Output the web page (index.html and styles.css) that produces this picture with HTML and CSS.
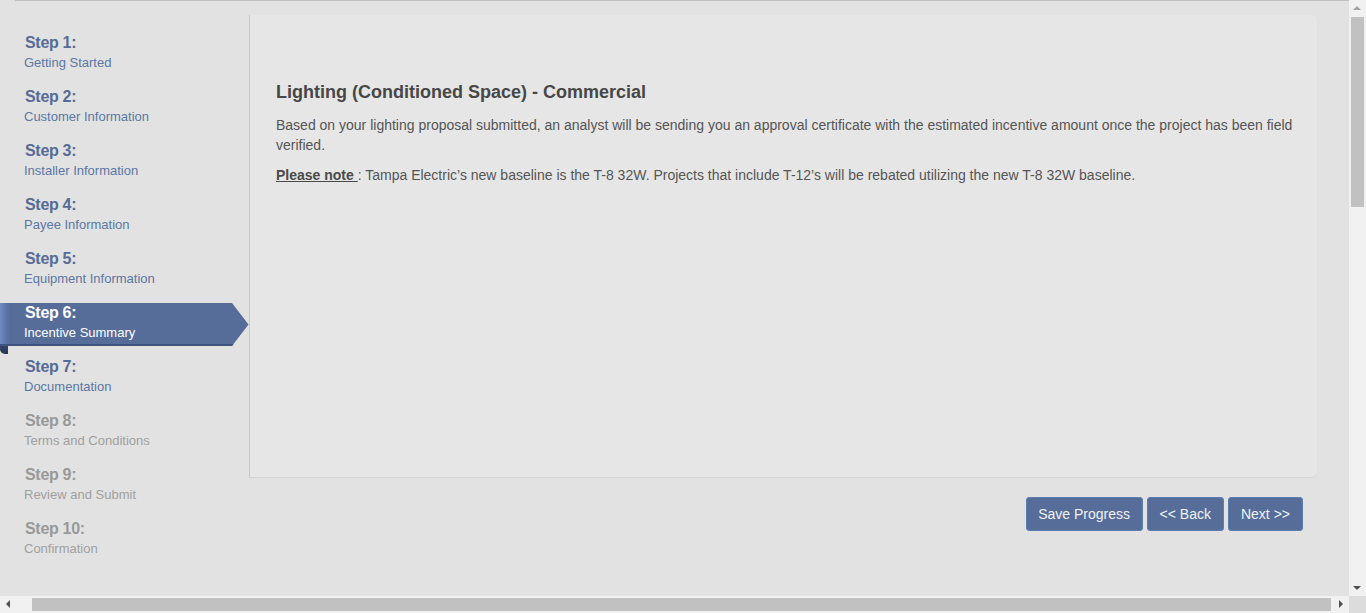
FILE: index.html
```html
<!DOCTYPE html>
<html lang="en">
<head>
<meta charset="utf-8">
<title>Incentive Summary</title>
<link rel="stylesheet" href="styles.css">
</head>
<body>
<div class="topline"></div>
<div class="layout">
  <nav class="steps">
    <div class="step"><div class="step-label">Step 1:</div><div class="step-name">Getting Started</div></div>
    <div class="step"><div class="step-label">Step 2:</div><div class="step-name">Customer Information</div></div>
    <div class="step"><div class="step-label">Step 3:</div><div class="step-name">Installer Information</div></div>
    <div class="step"><div class="step-label">Step 4:</div><div class="step-name">Payee Information</div></div>
    <div class="step"><div class="step-label">Step 5:</div><div class="step-name">Equipment Information</div></div>
    <div class="step step-active"><div class="step-label">Step 6:</div><div class="step-name">Incentive Summary</div></div>
    <div class="step"><div class="step-label">Step 7:</div><div class="step-name">Documentation</div></div>
    <div class="step step-disabled"><div class="step-label">Step 8:</div><div class="step-name">Terms and Conditions</div></div>
    <div class="step step-disabled"><div class="step-label">Step 9:</div><div class="step-name">Review and Submit</div></div>
    <div class="step step-disabled"><div class="step-label">Step 10:</div><div class="step-name">Confirmation</div></div>
  </nav>
  <main class="main">
    <section class="panel">
      <h3 class="panel-title">Lighting (Conditioned Space) - Commercial</h3>
      <p class="panel-text">Based on your lighting proposal submitted, an analyst will be sending you an approval certificate with the estimated incentive amount once the project has been field verified.</p>
      <p class="panel-text"><span class="note">Please note </span>: Tampa Electric’s new baseline is the T-8 32W. Projects that include T-12’s will be rebated utilizing the new T-8 32W baseline.</p>
    </section>
    <div class="actions">
      <button class="btn btn-wide" type="button">Save Progress</button>
      <button class="btn" type="button">&lt;&lt; Back</button>
      <button class="btn" type="button">Next &gt;&gt;</button>
    </div>
  </main>
</div>
<div class="vscroll">
  <span class="arrow arrow-up"></span>
  <span class="vthumb"></span>
  <span class="arrow arrow-down"></span>
</div>
<div class="hscroll">
  <span class="arrow arrow-left"></span>
  <span class="hthumb"></span>
  <span class="arrow arrow-right"></span>
</div>
<div class="corner"></div>
</body>
</html>
```

FILE: styles.css
```css
html, body {
  margin: 0;
  padding: 0;
}
body {
  background: #e2e2e2;
  font-family: "Liberation Sans", Arial, sans-serif;
  width: 1366px;
  height: 613px;
  overflow: hidden;
}
.topline {
  height: 1px;
  margin: 0 17px 0 15px;
  background: #bfbfbf;
}
.layout {
  display: flex;
  margin-top: 14px;
  margin-right: 49px;
}
.steps {
  width: 249px;
  flex: none;
  padding-top: 18px;
}
.step {
  position: relative;
  height: 43px;
  margin-bottom: 11px;
  padding-left: 24px;
  box-sizing: border-box;
}
.step-label {
  font-size: 16px;
  font-weight: bold;
  line-height: 20px;
  letter-spacing: -0.3px;
  color: #566c96;
  padding-left: 1px;
}
.step-name {
  font-size: 13px;
  line-height: 18px;
  margin-top: 1px;
  color: #5b77a4;
}
.step-disabled .step-label {
  color: #999999;
}
.step-disabled .step-name {
  color: #a0a0a0;
}
.step-active {
  background: linear-gradient(to right, #6f8cc4 0, #5a73a3 7px, #566d9a 10px, #566d9a 100%);
  clip-path: polygon(0 0, 232px 0, 248.5px 50%, 232px 100%, 0 100%);
  box-shadow: inset 0 -2px 0 #3f5480;
}
.step-active .step-label,
.step-active .step-name {
  color: #ffffff;
}
.steps .step-active + .step::before {
  content: "";
  position: absolute;
  left: 0;
  top: -11px;
  width: 8px;
  height: 8px;
  background: linear-gradient(to bottom, #34456a, #263452);
  border-bottom-left-radius: 5px;
}
.main {
  flex: 1;
  display: flex;
  flex-direction: column;
}
.panel {
  height: 462px;
  box-sizing: border-box;
  background: #e6e6e6;
  border-left: 1px solid #c9c9c9;
  border-radius: 0 5px 5px 0;
  box-shadow: 0 1px 1px rgba(0, 0, 0, 0.06);
  padding: 67px 12px 0 25px;
}
.panel-title {
  margin: 0 0 13px 1px;
  font-size: 18px;
  line-height: 20px;
  font-weight: bold;
  color: #474747;
}
.panel-text {
  margin: 0 0 10px 1px;
  font-size: 14px;
  line-height: 20px;
  color: #555555;
}
.note {
  font-weight: bold;
  text-decoration: underline;
  color: #4a4a4a;
}
.actions {
  display: flex;
  justify-content: flex-end;
  gap: 4px;
  padding: 20px 14px 0 0;
}
.btn {
  height: 34px;
  padding: 0 12px;
  background: #566d9a;
  border: 1px solid #5a7db2;
  border-radius: 3px;
  color: #f2f2f2;
  font-family: "Liberation Sans", Arial, sans-serif;
  font-size: 14px;
  line-height: 20px;
}
.btn-wide {
  width: 117px;
  padding: 0;
}
.vscroll {
  position: fixed;
  right: 0;
  top: 0;
  width: 17px;
  height: 596px;
  background: #f1f1f1;
}
.vthumb {
  position: absolute;
  left: 2px;
  top: 17px;
  width: 13px;
  height: 190px;
  background: #c1c1c1;
}
.hscroll {
  position: fixed;
  left: 0;
  bottom: 0;
  width: 1349px;
  height: 17px;
  background: #f1f1f1;
}
.hthumb {
  position: absolute;
  left: 32px;
  top: 2px;
  width: 1299px;
  height: 13px;
  background: #c1c1c1;
}
.corner {
  position: fixed;
  right: 0;
  bottom: 0;
  width: 17px;
  height: 17px;
  background: #dcdcdc;
}
.arrow {
  position: absolute;
  width: 0;
  height: 0;
  border-style: solid;
}
.arrow-up {
  left: 4px;
  top: 6px;
  border-width: 0 4px 4px 4px;
  border-color: transparent transparent #a3a3a3 transparent;
}
.arrow-down {
  left: 4px;
  bottom: 6px;
  border-width: 4px 4px 0 4px;
  border-color: #505050 transparent transparent transparent;
}
.arrow-left {
  left: 6px;
  top: 4px;
  border-width: 4px 4px 4px 0;
  border-color: transparent #505050 transparent transparent;
}
.arrow-right {
  right: 6px;
  top: 4px;
  border-width: 4px 0 4px 4px;
  border-color: transparent transparent transparent #505050;
}
```
